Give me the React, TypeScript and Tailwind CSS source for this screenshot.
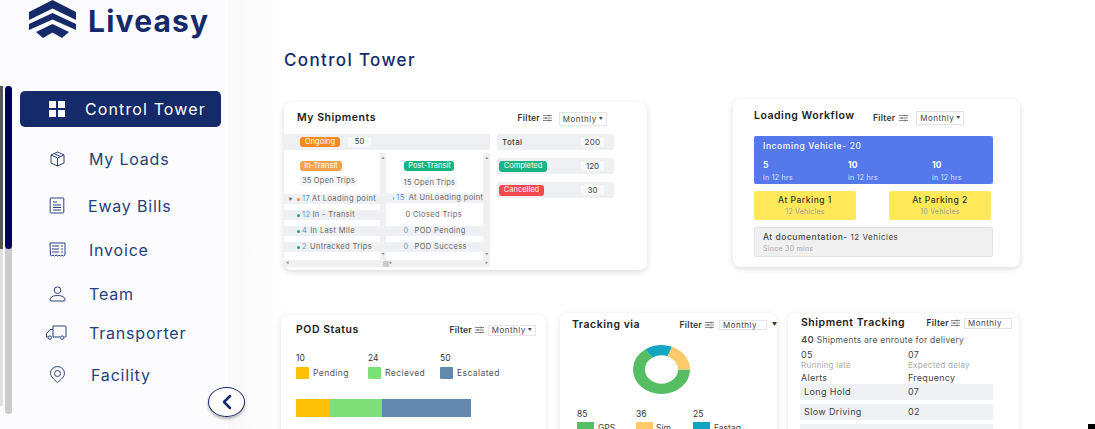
import { ChevronLeft } from 'lucide-react'

const font = { fontFamily: 'Inter, sans-serif' }

function FilterIcon({ className = 'w-[9px] h-[8px]' }: { className?: string }) {
  return (
    <svg className={className} viewBox="0 0 9 8" fill="none" stroke="#555" strokeWidth="0.7">
      <path d="M0 1.500h9M0 4h9M0 6.500h9" />
      <path d="M6 .5v2M3 3v2M6 5.500v2" />
    </svg>
  )
}

function Monthly({ className = '', caret = true }: { className?: string; caret?: boolean }) {
  return (
    <div className={`flex items-center justify-center gap-[2px] h-[14px] w-[48px] bg-white border border-[#e5e5e5] text-[8px] tracking-[0.06em] text-[#444] ${className}`}>
      Monthly
      {caret && <span className="text-[4px]">▼</span>}
    </div>
  )
}

function Row({ className = '', children }: { className?: string; children: React.ReactNode }) {
  return <div className={`flex items-center h-[10px] text-[7.5px] tracking-[0.05em] text-[#666] whitespace-nowrap ${className}`}>{children}</div>
}

function Dot({ color }: { color: string }) {
  return <span className={`w-[3px] h-[3px] rounded-full mr-[2px] ${color}`} />
}

function VBar() {
  return (
    <div className="w-[7px] bg-[#f0f0f0] flex flex-col items-center justify-between text-[3px] text-[#888] py-[3px]">
      <span>▲</span>
      <span>▼</span>
    </div>
  )
}

function MyShipments() {
  return (
    <section className="w-[363px] h-[168px] bg-white rounded-[8px] shadow-[0_2px_6px_rgba(0,0,0,0.14)] flex flex-col">
      <header className="flex items-center h-[32px] pl-[13px] pr-[40px]">
        <h2 className="text-[10.5px] font-semibold tracking-[0.05em] text-[#222]">My Shipments</h2>
        <span className="ml-auto text-[8.5px] font-semibold tracking-[0.03em] text-[#333] mr-[3px]">Filter</span>
        <FilterIcon />
        <Monthly className="ml-[7px] mt-[1px]" />
      </header>
      <div className="flex flex-1 min-h-0">
        <div className="w-[206px] flex flex-col">
          <div className="h-[16px] bg-[#eef0f3] flex items-center pl-[16px]">
            <span className="h-[10px] w-[40px] rounded-[3px] bg-[#f68a1e] text-white text-[7.5px] flex items-center justify-center">Ongoing</span>
            <span className="ml-[8px] w-[23px] h-[10px] bg-[#f8f8f8] text-[7.5px] text-[#333] flex items-center justify-center">50</span>
          </div>
          <div className="flex flex-1 mt-[3px]">
            <div className="w-[102px] flex flex-col">
              <span className="ml-[16px] mt-[8px] h-[10px] w-[42px] rounded-[3px] bg-[#f5a34f] text-white text-[7.5px] flex items-center justify-center">In-Transit</span>
              <span className="ml-[16px] mt-[5px] h-[10px] w-[57px] bg-[#f6f6f6] text-[7.5px] tracking-[0.03em] text-[#666] flex items-center justify-center whitespace-nowrap">35 Open Trips</span>
              <Row className="mt-[8px] pl-[5px] bg-[#eef0f3]">
                <span className="text-[4px] mr-[4px]">▶</span>
                <Dot color="bg-[#f68a1e]" />
                <span className="text-[#5b9bd5] mr-[2px]">17</span> At Loading point
              </Row>
              <Row className="mt-[6px] pl-[13px] bg-[#eef0f3]">
                <Dot color="bg-[#10a37f]" />
                <span className="text-[#5b9bd5] mr-[2px]">12</span> In - Transit
              </Row>
              <Row className="mt-[6px] pl-[13px] bg-[#eef0f3]">
                <Dot color="bg-[#10a37f]" />
                <span className="text-[#5b9bd5] mr-[3px]">4</span> In Last Mile
              </Row>
              <Row className="mt-[6px] pl-[13px] bg-[#eef0f3]">
                <Dot color="bg-[#10a37f]" />
                <span className="text-[#5b9bd5] mr-[3px]">2</span> Untracked Trips
              </Row>
            </div>
            <VBar />
            <div className="w-[97px] flex flex-col">
              <span className="ml-[18px] mt-[8px] h-[10px] w-[50px] rounded-[3px] bg-[#17b582] text-white text-[7.5px] flex items-center justify-center whitespace-nowrap">Post-Transit</span>
              <span className="ml-[15px] mt-[7px] h-[10px] w-[56px] bg-[#f6f6f6] text-[7.5px] tracking-[0.03em] text-[#666] flex items-center justify-center whitespace-nowrap">15 Open Trips</span>
              <Row className="mt-[5px] pl-[7px] bg-[#eef0f3] overflow-hidden">
                <Dot color="bg-[#f68a1e]" />
                <span className="text-[#5b9bd5] mr-[4px]">15</span> At UnLoading point
              </Row>
              <Row className="mt-[7px] pl-[19px]">0 Closed Trips</Row>
              <Row className="mt-[6px] pl-[17px] bg-[#eef0f3]">
                <span className="text-[#5b9bd5] mr-[6px]">0</span> POD Pending
              </Row>
              <Row className="mt-[6px] pl-[17px] bg-[#eef0f3]">
                <span className="text-[#5b9bd5] mr-[6px]">0</span> POD Success
              </Row>
            </div>
            <VBar />
          </div>
          <div className="h-[7px] mb-[3px] bg-[#f0f0f0] flex items-center justify-between text-[3px] text-[#888] px-[2px]">
            <span>◀</span>
            <span className="w-[6px] h-[6px] bg-[#ccc] ml-[94px]" />
            <span className="mr-auto">◀</span>
            <span>▶</span>
          </div>
        </div>
        <div className="w-[117px] ml-[7px] flex flex-col gap-[8px]">
          <div className="h-[16px] bg-[#eef0f3] flex items-center justify-between pl-[5px] pr-[10px] text-[8px] font-medium tracking-[0.04em] text-[#444]">
            Total <span className="w-[23px] h-[10px] bg-[#f8f8f8] font-normal flex items-center justify-center">200</span>
          </div>
          <div className="h-[16px] bg-[#eef0f3] flex items-center justify-between pl-[2px] pr-[10px] text-[8px] text-[#444]">
            <span className="h-[11px] w-[48px] rounded-[3px] bg-[#17b582] text-white text-[7.5px] flex items-center justify-center">Completed</span>
            <span className="w-[23px] h-[10px] bg-[#f8f8f8] flex items-center justify-center">120</span>
          </div>
          <div className="h-[16px] bg-[#eef0f3] flex items-center justify-between pl-[2px] pr-[10px] text-[8px] text-[#444]">
            <span className="h-[11px] w-[45px] rounded-[3px] bg-[#f4474f] text-white text-[7.5px] flex items-center justify-center">Cancelled</span>
            <span className="w-[23px] h-[10px] bg-[#f8f8f8] flex items-center justify-center">30</span>
          </div>
        </div>
      </div>
    </section>
  )
}

function LoadingWorkflow() {
  return (
    <section className="ml-[86px] -mt-[3px] w-[287px] h-[168px] bg-white rounded-[8px] shadow-[0_2px_6px_rgba(0,0,0,0.14)] pl-[21px] pr-[27px]">
      <header className="flex items-start h-[37px] pt-[9px]">
        <h2 className="text-[10.5px] font-semibold tracking-[0.05em] text-[#222] w-[119px] whitespace-nowrap">Loading Workflow</h2>
        <span className="mt-[4px] text-[8.5px] font-semibold tracking-[0.03em] text-[#333] mr-[4px]">Filter</span>
        <FilterIcon className="mt-[6px] w-[9px] h-[8px]" />
        <Monthly className="ml-[8px] mt-[3px]" />
      </header>
      <div className="h-[48px] bg-[#5578eb] rounded-[2px] px-[9px] pt-[4px] text-white">
        <p className="text-[8.5px] font-medium tracking-[0.07em]">Incoming Vehicle<span className="font-normal">- 20</span></p>
        <div className="grid grid-cols-[85px_84px_1fr] mt-[6px] text-[8.5px] font-bold">
          <span>5</span>
          <span>10</span>
          <span>10</span>
        </div>
        <div className="grid grid-cols-[85px_84px_1fr] mt-[1px] text-[7px] tracking-[0.04em] text-[#dfe6fb]">
          <span>in 12 hrs</span>
          <span>in 12 hrs</span>
          <span>in 12 hrs</span>
        </div>
      </div>
      <div className="flex justify-between mt-[7px] pr-[2px]">
        <div className="w-[102px] h-[29px] bg-[#ffe95a] rounded-[2px] flex flex-col items-center justify-center">
          <span className="text-[8.5px] font-medium tracking-[0.06em] text-[#333]">At Parking 1</span>
          <span className="text-[7px] tracking-[0.03em] text-[#999]">12 Vehicles</span>
        </div>
        <div className="w-[102px] h-[29px] bg-[#ffe95a] rounded-[2px] flex flex-col items-center justify-center">
          <span className="text-[8.5px] font-medium tracking-[0.06em] text-[#333]">At Parking 2</span>
          <span className="text-[7px] tracking-[0.03em] text-[#999]">10 Vehicles</span>
        </div>
      </div>
      <div className="mt-[7px] h-[30px] bg-[#f0f0f0] border border-[#e2e2e2] rounded-[2px] px-[8px] pt-[3px]">
        <p className="text-[8.5px] text-[#444] font-medium tracking-[0.06em]">At documentation-<span className="font-normal text-[8px]"> 12 Vehicles</span></p>
        <p className="text-[7px] tracking-[0.04em] text-[#aaa]">Since 30 mins</p>
      </div>
    </section>
  )
}

function Legend({ value, label, color }: { value: string; label: string; color: string }) {
  return (
    <div className="w-[72px]">
      <p className="text-[8.5px] text-[#333] leading-[10px]">{value}</p>
      <div className="flex items-center mt-[4px]">
        <span className={`w-[13px] h-[12px] rounded-[1px] ${color}`} />
        <span className="ml-[4px] text-[8.5px] tracking-[0.05em] text-[#555]">{label}</span>
      </div>
    </div>
  )
}

function PodStatus() {
  return (
    <section className="-ml-[3px] w-[265px] h-[130px] bg-white rounded-t-[8px] shadow-[0_1px_6px_rgba(0,0,0,0.1)] pl-[15px] pr-[10px]">
      <header className="flex items-center h-[30px]">
        <h2 className="text-[10.5px] font-semibold tracking-[0.05em] text-[#222]">POD Status</h2>
        <span className="ml-auto text-[8.5px] font-semibold tracking-[0.03em] text-[#333] mr-[3px]">Filter</span>
        <FilterIcon />
        <Monthly className="ml-[4px] !h-[11px]" />
      </header>
      <div className="flex mt-[8px]">
        <Legend value="10" label="Pending" color="bg-[#ffc107]" />
        <Legend value="24" label="Recieved" color="bg-[#7fe07a]" />
        <Legend value="50" label="Escalated" color="bg-[#6288ae]" />
      </div>
      <div className="flex w-[175px] h-[18px] mt-[19px]">
        <div className="w-[34px] bg-[#ffc107]" />
        <div className="w-[52px] bg-[#7fe07a]" />
        <div className="flex-1 bg-[#6288ae]" />
      </div>
    </section>
  )
}

function Donut() {
  const c = 2 * Math.PI * 39.5
  const parts = [
    { color: '#56bd63', from: 0, size: 0.65 },
    { color: '#12a5c0', from: 0.65, size: 0.155 },
    { color: '#fcc96b', from: 0.805, size: 0.195 },
  ]
  return (
    <svg className="w-[57px] h-[49px]" viewBox="0 0 100 100" preserveAspectRatio="none">
      {parts.map((p) => (
        <circle
          key={p.color}
          cx="50"
          cy="50"
          r="39.5"
          fill="none"
          stroke={p.color}
          strokeWidth="21"
          strokeDasharray={`${p.size * c} ${c}`}
          strokeDashoffset={-p.from * c}
        />
      ))}
    </svg>
  )
}

function TrackingVia() {
  return (
    <section className="ml-[14px] -mt-[2px] w-[217px] h-[132px] bg-white rounded-t-[8px] shadow-[0_1px_6px_rgba(0,0,0,0.1)] pl-[12px]">
      <header className="flex items-center h-[24px]">
        <h2 className="text-[10.5px] font-semibold tracking-[0.05em] text-[#222]">Tracking via</h2>
        <span className="ml-auto text-[8.5px] font-semibold tracking-[0.03em] text-[#333] mr-[3px]">Filter</span>
        <FilterIcon />
        <Monthly className="ml-[5px] !h-[10px] !justify-start pl-[3px]" caret={false} />
        <span className="w-[10px] text-right text-[5px] text-[#333]">▼</span>
      </header>
      <div className="flex justify-center mt-[8px] pr-[27px]">
        <Donut />
      </div>
      <div className="flex mt-[15px] pl-[5px]">
        <div className="w-[59px]">
          <p className="text-[8.5px] text-[#333] leading-[10px]">85</p>
          <div className="flex items-center mt-[3px]">
            <span className="w-[17px] h-[12px] bg-[#56bd63]" />
            <span className="ml-[4px] text-[8.5px] text-[#444]">GPS</span>
          </div>
        </div>
        <div className="w-[57px]">
          <p className="text-[8.5px] text-[#333] leading-[10px]">36</p>
          <div className="flex items-center mt-[3px]">
            <span className="w-[17px] h-[12px] bg-[#fcc96b]" />
            <span className="ml-[3px] text-[8.5px] text-[#444]">Sim</span>
          </div>
        </div>
        <div>
          <p className="text-[8.5px] text-[#333] leading-[10px]">25</p>
          <div className="flex items-center mt-[3px]">
            <span className="w-[17px] h-[12px] bg-[#12a5c0]" />
            <span className="ml-[4px] text-[8.5px] text-[#444]">Fastag</span>
          </div>
        </div>
      </div>
    </section>
  )
}

function ShipmentTracking() {
  return (
    <section className="ml-[11px] -mt-[2px] w-[231px] h-[132px] bg-white rounded-t-[8px] shadow-[0_1px_6px_rgba(0,0,0,0.1)] pl-[13px] pr-[7px]">
      <header className="flex items-center h-[20px]">
        <h2 className="text-[10.5px] font-semibold tracking-[0.05em] text-[#222]">Shipment Tracking</h2>
        <span className="ml-auto text-[8.5px] font-semibold tracking-[0.03em] text-[#333] mr-[2px]">Filter</span>
        <FilterIcon />
        <Monthly className="ml-[4px] !h-[11px] !justify-start pl-[3px]" caret={false} />
      </header>
      <p className="mt-[1px] text-[8.5px] tracking-[0.03em] text-[#555] leading-[12px]">
        <span className="text-[9.5px] font-semibold">40</span> Shipments are enroute for delivery
      </p>
      <div className="grid grid-cols-[107px_1fr] mt-[3px] text-[9px] tracking-[0.03em] leading-[11px] text-[#444]">
        <span>05</span>
        <span>07</span>
        <span className="text-[8px] text-[#aaa]">Running late</span>
        <span className="text-[8px] text-[#aaa]">Expected delay</span>
        <span className="mt-[1px]">Alerts</span>
        <span className="mt-[1px]">Frequency</span>
      </div>
      <div className="mt-[1px] -ml-[1px] flex flex-col gap-[4px] w-[193px] text-[9px] tracking-[0.04em] text-[#444]">
        <div className="grid grid-cols-[107px_1fr] items-center h-[16px] bg-[#eef0f3] pl-[4px]">
          <span>Long Hold</span>
          <span className="-ml-[3px]">07</span>
        </div>
        <div className="grid grid-cols-[107px_1fr] items-center h-[16px] bg-[#eef0f3] pl-[4px]">
          <span>Slow Driving</span>
          <span className="-ml-[3px]">02</span>
        </div>
        <div className="h-[16px] bg-[#eef0f3]" />
      </div>
    </section>
  )
}

const nav = [
  { label: 'My Loads', icon: 'box', item: 'mt-[23px]', text: 'ml-[23px]' },
  { label: 'Eway Bills', icon: 'bill', item: 'mt-[30px]', text: 'ml-[22px]' },
  { label: 'Invoice', icon: 'invoice', item: 'mt-[27px]', text: 'ml-[23px]' },
  { label: 'Team', icon: 'team', item: 'mt-[27px]', text: 'ml-[23px]' },
  { label: 'Transporter', icon: 'truck', item: 'mt-[22px]', text: 'ml-[22px]' },
  { label: 'Facility', icon: 'pin', item: 'mt-[25px]', text: 'ml-[25px]' },
]

function NavIcon({ name }: { name: string }) {
  const p = { fill: 'none', stroke: '#27407c', strokeWidth: 1 }
  if (name === 'truck') {
    return (
      <svg className="w-[21px] h-[15px] -ml-[3px] shrink-0" viewBox="0 0 21 15" {...p}>
        <path d="M7 1h12a1 1 0 0 1 1 1v9a1 1 0 0 1-1 1h-.8M7 1v11h7M7 4.500H4L.5 8.500V12h1.500" />
        <circle cx="3.800" cy="12.600" r="1.700" />
        <circle cx="16.200" cy="12.600" r="1.700" />
      </svg>
    )
  }
  return (
    <svg className="w-[17px] h-[17px] shrink-0" viewBox="0 0 17 17" {...p}>
      {name === 'box' && <path d="M2 5l6.500-3L15 5v8l-6.500 3L2 13zM2 5l6.500 3L15 5M8.500 8v8M5 3.500l6.500 3" />}
      {name === 'bill' && <path d="M2 1h12a.8.8 0 0 1 .8.8v13.400a.8.8 0 0 1-.8.8H2a.8.8 0 0 1-.8-.8V1.800A.8.8 0 0 1 2 1zM4 5h4M4 8h8M4 10.500h8M4 13h8" />}
      {name === 'invoice' && <path d="M1 2h15v12l-1.500 1-1.500-1-1.500 1-1.500-1-1.500 1-1.500-1-1.500 1-1.500-1-1.500 1-1-1zM3 5h7M3 8h7M3 11h7M12 5h2M12 8h2M12 11h2" />}
      {name === 'team' && <path d="M8.500 8.500a3.300 3.300 0 1 0 0-6.600 3.300 3.300 0 0 0 0 6.600zM1 15c0-3 3-4.500 7.500-4.500S16 12 16 15c0 .5-.5 1-1 1H2c-.5 0-1-.5-1-1z" />}
      {name === 'pin' && <path d="M8.500 16.500C5 13.500 1.500 10.500 1.500 7.500a7 7 0 0 1 14 0c0 3-3.500 6-7 9z" />}
      {name === 'pin' && <circle cx="8.500" cy="7.500" r="3" />}
    </svg>
  )
}

function Sidebar() {
  return (
    <aside className="relative w-[228px] shrink-0 bg-[#fcfcfe] flex">
      <div className="w-[20px] shrink-0 flex pt-[86px] pb-[15px]">
        <div className="w-[3px] h-[320px] bg-[#e0e0e0]">
          <div className="h-[163px] bg-[#555]" />
        </div>
        <div className="ml-[2px] w-[7px] rounded-full bg-[#ccc]">
          <div className="h-[163px] rounded-full bg-[#00005f]" />
        </div>
      </div>
      <div className="flex-1 flex flex-col">
        <div className="flex items-center h-[38px] pl-[9px]">
          <svg className="w-[47px] h-[38px] shrink-0" viewBox="0 0 47 38" fill="#152a69">
            <path d="M23.500 0L47 12v8L23.500 8.500 0 20v-8z" />
            <path d="M23.500 13L47 24v6L23.500 19.500 0 30v-6z" />
            <path d="M23.500 24L40 32l-7 6-9.500-5.500L14 38l-7-6z" />
          </svg>
          <span className="ml-[12px] mt-[4px] text-[30px] font-bold tracking-[0.04em] text-[#152a69] leading-none">Liveasy</span>
        </div>
        <div className="mt-[53px] h-[36px] w-[201px] rounded-[5px] bg-[#152a69] flex items-center pl-[29px] text-white text-[16px] tracking-[0.07em]">
          <svg className="w-[16px] h-[16px] shrink-0" viewBox="0 0 16 16" fill="#fff">
            <path d="M0 0h7v7H0zM9 0h7v7H9zM0 9h7v7H0zM9 9h7v7H9z" />
          </svg>
          <span className="ml-[20px] whitespace-nowrap">Control Tower</span>
        </div>
        {nav.map((n) => (
          <div key={n.label} className={`flex items-center h-[17px] pl-[29px] text-[16px] tracking-[0.05em] text-[#27407c] ${n.item}`}>
            <NavIcon name={n.icon} />
            <span className={n.text}>{n.label}</span>
          </div>
        ))}
      </div>
      <button className="absolute left-[208px] top-[387px] w-[37px] h-[30px] rounded-[50%] bg-white border border-[#152a69] shadow-[0_2px_3px_rgba(0,0,0,0.3)] flex items-center justify-center">
        <ChevronLeft className="w-[24px] h-[24px] text-[#152a69]" strokeWidth={2.5} />
      </button>
    </aside>
  )
}

export default function App() {
  return (
    <div className="relative w-[1095px] h-[429px] overflow-hidden flex bg-white" style={font}>
      <Sidebar />
      <main className="flex-1 pl-[56px] pt-[50px] bg-gradient-to-r from-[#f8f8f8] to-white to-[7%]">
        <h1 className="text-[17px] font-medium tracking-[0.08em] text-[#152a69] leading-[20px]">Control Tower</h1>
        <div className="flex mt-[32px]">
          <MyShipments />
          <LoadingWorkflow />
        </div>
        <div className="flex mt-[45px]">
          <PodStatus />
          <TrackingVia />
          <ShipmentTracking />
        </div>
      </main>
      <div className="absolute right-0 bottom-0 w-[7px] h-[5px] bg-black" />
    </div>
  )
}
